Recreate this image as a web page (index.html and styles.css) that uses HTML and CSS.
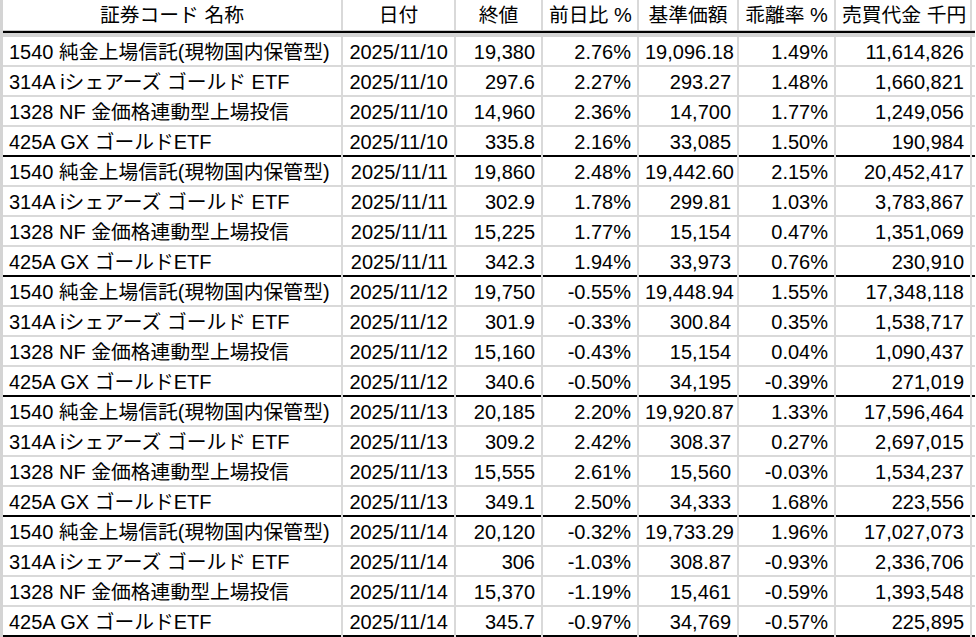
FILE: index.html
```html
<!DOCTYPE html>
<html lang="ja">
<head>
<meta charset="utf-8">
<title>金ETF 比較</title>
<link rel="stylesheet" href="styles.css">
</head>
<body>
<div class="sheet">
  <div class="row head">
    <div class="c name center"><span class="j">証券コード</span> <span class="j">名称</span></div>
    <div class="c center"><span class="j">日付</span></div>
    <div class="c center"><span class="j">終値</span></div>
    <div class="c center"><span class="j">前日比</span> %</div>
    <div class="c center"><span class="j">基準価額</span></div>
    <div class="c center"><span class="j">乖離率</span> %</div>
    <div class="c center"><span class="j">売買代金</span> <span class="j">千円</span></div>
  </div>
  <div class="sep"></div>

  <div class="row"><div class="c name">1540 <span class="j">純金上場信託</span>(<span class="j">現物国内保管型</span>)</div><div class="c">2025/11/10</div><div class="c">19,380</div><div class="c">2.76%</div><div class="c">19,096.18</div><div class="c">1.49%</div><div class="c">11,614,826</div></div>
  <div class="row"><div class="c name">314A i<span class="j">シェアーズ</span> <span class="j">ゴールド</span> ETF</div><div class="c">2025/11/10</div><div class="c">297.6</div><div class="c">2.27%</div><div class="c">293.27</div><div class="c">1.48%</div><div class="c">1,660,821</div></div>
  <div class="row"><div class="c name">1328 NF <span class="j">金価格連動型上場投信</span></div><div class="c">2025/11/10</div><div class="c">14,960</div><div class="c">2.36%</div><div class="c">14,700</div><div class="c">1.77%</div><div class="c">1,249,056</div></div>
  <div class="row end"><div class="c name">425A GX <span class="j">ゴールド</span>ETF</div><div class="c">2025/11/10</div><div class="c">335.8</div><div class="c">2.16%</div><div class="c">33,085</div><div class="c">1.50%</div><div class="c">190,984</div></div>

  <div class="row"><div class="c name">1540 <span class="j">純金上場信託</span>(<span class="j">現物国内保管型</span>)</div><div class="c">2025/11/11</div><div class="c">19,860</div><div class="c">2.48%</div><div class="c">19,442.60</div><div class="c">2.15%</div><div class="c">20,452,417</div></div>
  <div class="row"><div class="c name">314A i<span class="j">シェアーズ</span> <span class="j">ゴールド</span> ETF</div><div class="c">2025/11/11</div><div class="c">302.9</div><div class="c">1.78%</div><div class="c">299.81</div><div class="c">1.03%</div><div class="c">3,783,867</div></div>
  <div class="row"><div class="c name">1328 NF <span class="j">金価格連動型上場投信</span></div><div class="c">2025/11/11</div><div class="c">15,225</div><div class="c">1.77%</div><div class="c">15,154</div><div class="c">0.47%</div><div class="c">1,351,069</div></div>
  <div class="row end"><div class="c name">425A GX <span class="j">ゴールド</span>ETF</div><div class="c">2025/11/11</div><div class="c">342.3</div><div class="c">1.94%</div><div class="c">33,973</div><div class="c">0.76%</div><div class="c">230,910</div></div>

  <div class="row"><div class="c name">1540 <span class="j">純金上場信託</span>(<span class="j">現物国内保管型</span>)</div><div class="c">2025/11/12</div><div class="c">19,750</div><div class="c">-0.55%</div><div class="c">19,448.94</div><div class="c">1.55%</div><div class="c">17,348,118</div></div>
  <div class="row"><div class="c name">314A i<span class="j">シェアーズ</span> <span class="j">ゴールド</span> ETF</div><div class="c">2025/11/12</div><div class="c">301.9</div><div class="c">-0.33%</div><div class="c">300.84</div><div class="c">0.35%</div><div class="c">1,538,717</div></div>
  <div class="row"><div class="c name">1328 NF <span class="j">金価格連動型上場投信</span></div><div class="c">2025/11/12</div><div class="c">15,160</div><div class="c">-0.43%</div><div class="c">15,154</div><div class="c">0.04%</div><div class="c">1,090,437</div></div>
  <div class="row end"><div class="c name">425A GX <span class="j">ゴールド</span>ETF</div><div class="c">2025/11/12</div><div class="c">340.6</div><div class="c">-0.50%</div><div class="c">34,195</div><div class="c">-0.39%</div><div class="c">271,019</div></div>

  <div class="row"><div class="c name">1540 <span class="j">純金上場信託</span>(<span class="j">現物国内保管型</span>)</div><div class="c">2025/11/13</div><div class="c">20,185</div><div class="c">2.20%</div><div class="c">19,920.87</div><div class="c">1.33%</div><div class="c">17,596,464</div></div>
  <div class="row"><div class="c name">314A i<span class="j">シェアーズ</span> <span class="j">ゴールド</span> ETF</div><div class="c">2025/11/13</div><div class="c">309.2</div><div class="c">2.42%</div><div class="c">308.37</div><div class="c">0.27%</div><div class="c">2,697,015</div></div>
  <div class="row"><div class="c name">1328 NF <span class="j">金価格連動型上場投信</span></div><div class="c">2025/11/13</div><div class="c">15,555</div><div class="c">2.61%</div><div class="c">15,560</div><div class="c">-0.03%</div><div class="c">1,534,237</div></div>
  <div class="row end"><div class="c name">425A GX <span class="j">ゴールド</span>ETF</div><div class="c">2025/11/13</div><div class="c">349.1</div><div class="c">2.50%</div><div class="c">34,333</div><div class="c">1.68%</div><div class="c">223,556</div></div>

  <div class="row"><div class="c name">1540 <span class="j">純金上場信託</span>(<span class="j">現物国内保管型</span>)</div><div class="c">2025/11/14</div><div class="c">20,120</div><div class="c">-0.32%</div><div class="c">19,733.29</div><div class="c">1.96%</div><div class="c">17,027,073</div></div>
  <div class="row"><div class="c name">314A i<span class="j">シェアーズ</span> <span class="j">ゴールド</span> ETF</div><div class="c">2025/11/14</div><div class="c">306</div><div class="c">-1.03%</div><div class="c">308.87</div><div class="c">-0.93%</div><div class="c">2,336,706</div></div>
  <div class="row"><div class="c name">1328 NF <span class="j">金価格連動型上場投信</span></div><div class="c">2025/11/14</div><div class="c">15,370</div><div class="c">-1.19%</div><div class="c">15,461</div><div class="c">-0.59%</div><div class="c">1,393,548</div></div>
  <div class="row end"><div class="c name">425A GX <span class="j">ゴールド</span>ETF</div><div class="c">2025/11/14</div><div class="c">345.7</div><div class="c">-0.97%</div><div class="c">34,769</div><div class="c">-0.57%</div><div class="c">225,895</div></div>
</div>
</body>
</html>
```

FILE: styles.css
```css
html, body {
  margin: 0;
  padding: 0;
  background: #ffffff;
}

.sheet {
  width: 975px;
  border-left: 3px solid #d4d4d4;
  box-sizing: border-box;
  font-family: "Liberation Sans", "Noto Sans CJK JP", sans-serif;
  font-size: 20px;
  color: #000;
}

.row {
  display: grid;
  grid-template-columns: 340px 113px 87px 96px 100px 97px 136px;
  height: 30px;
  box-sizing: border-box;
  border-bottom: 2px solid #d9d9d9;
}

.row.end {
  border-bottom: 2px solid #000;
}

.row.head {
  height: 31px;
  border-bottom: 1px solid #c8c8c8;
}

.sep {
  height: 6px;
  border-top: 2px solid #000;
  box-sizing: border-box;
  background: #d4d4d4;
}

.c {
  box-sizing: border-box;
  border-right: 2px solid #d9d9d9;
  padding: 0 6px;
  text-align: right;
  line-height: 30px;
  white-space: nowrap;
}

.head .c {
  line-height: 30px;
}

.c.name {
  text-align: left;
}

.c.center {
  text-align: center;
}

.j {
  font-family: "Noto Sans CJK JP", sans-serif;
  font-size: 19.8px;
  line-height: 1;
}
```
